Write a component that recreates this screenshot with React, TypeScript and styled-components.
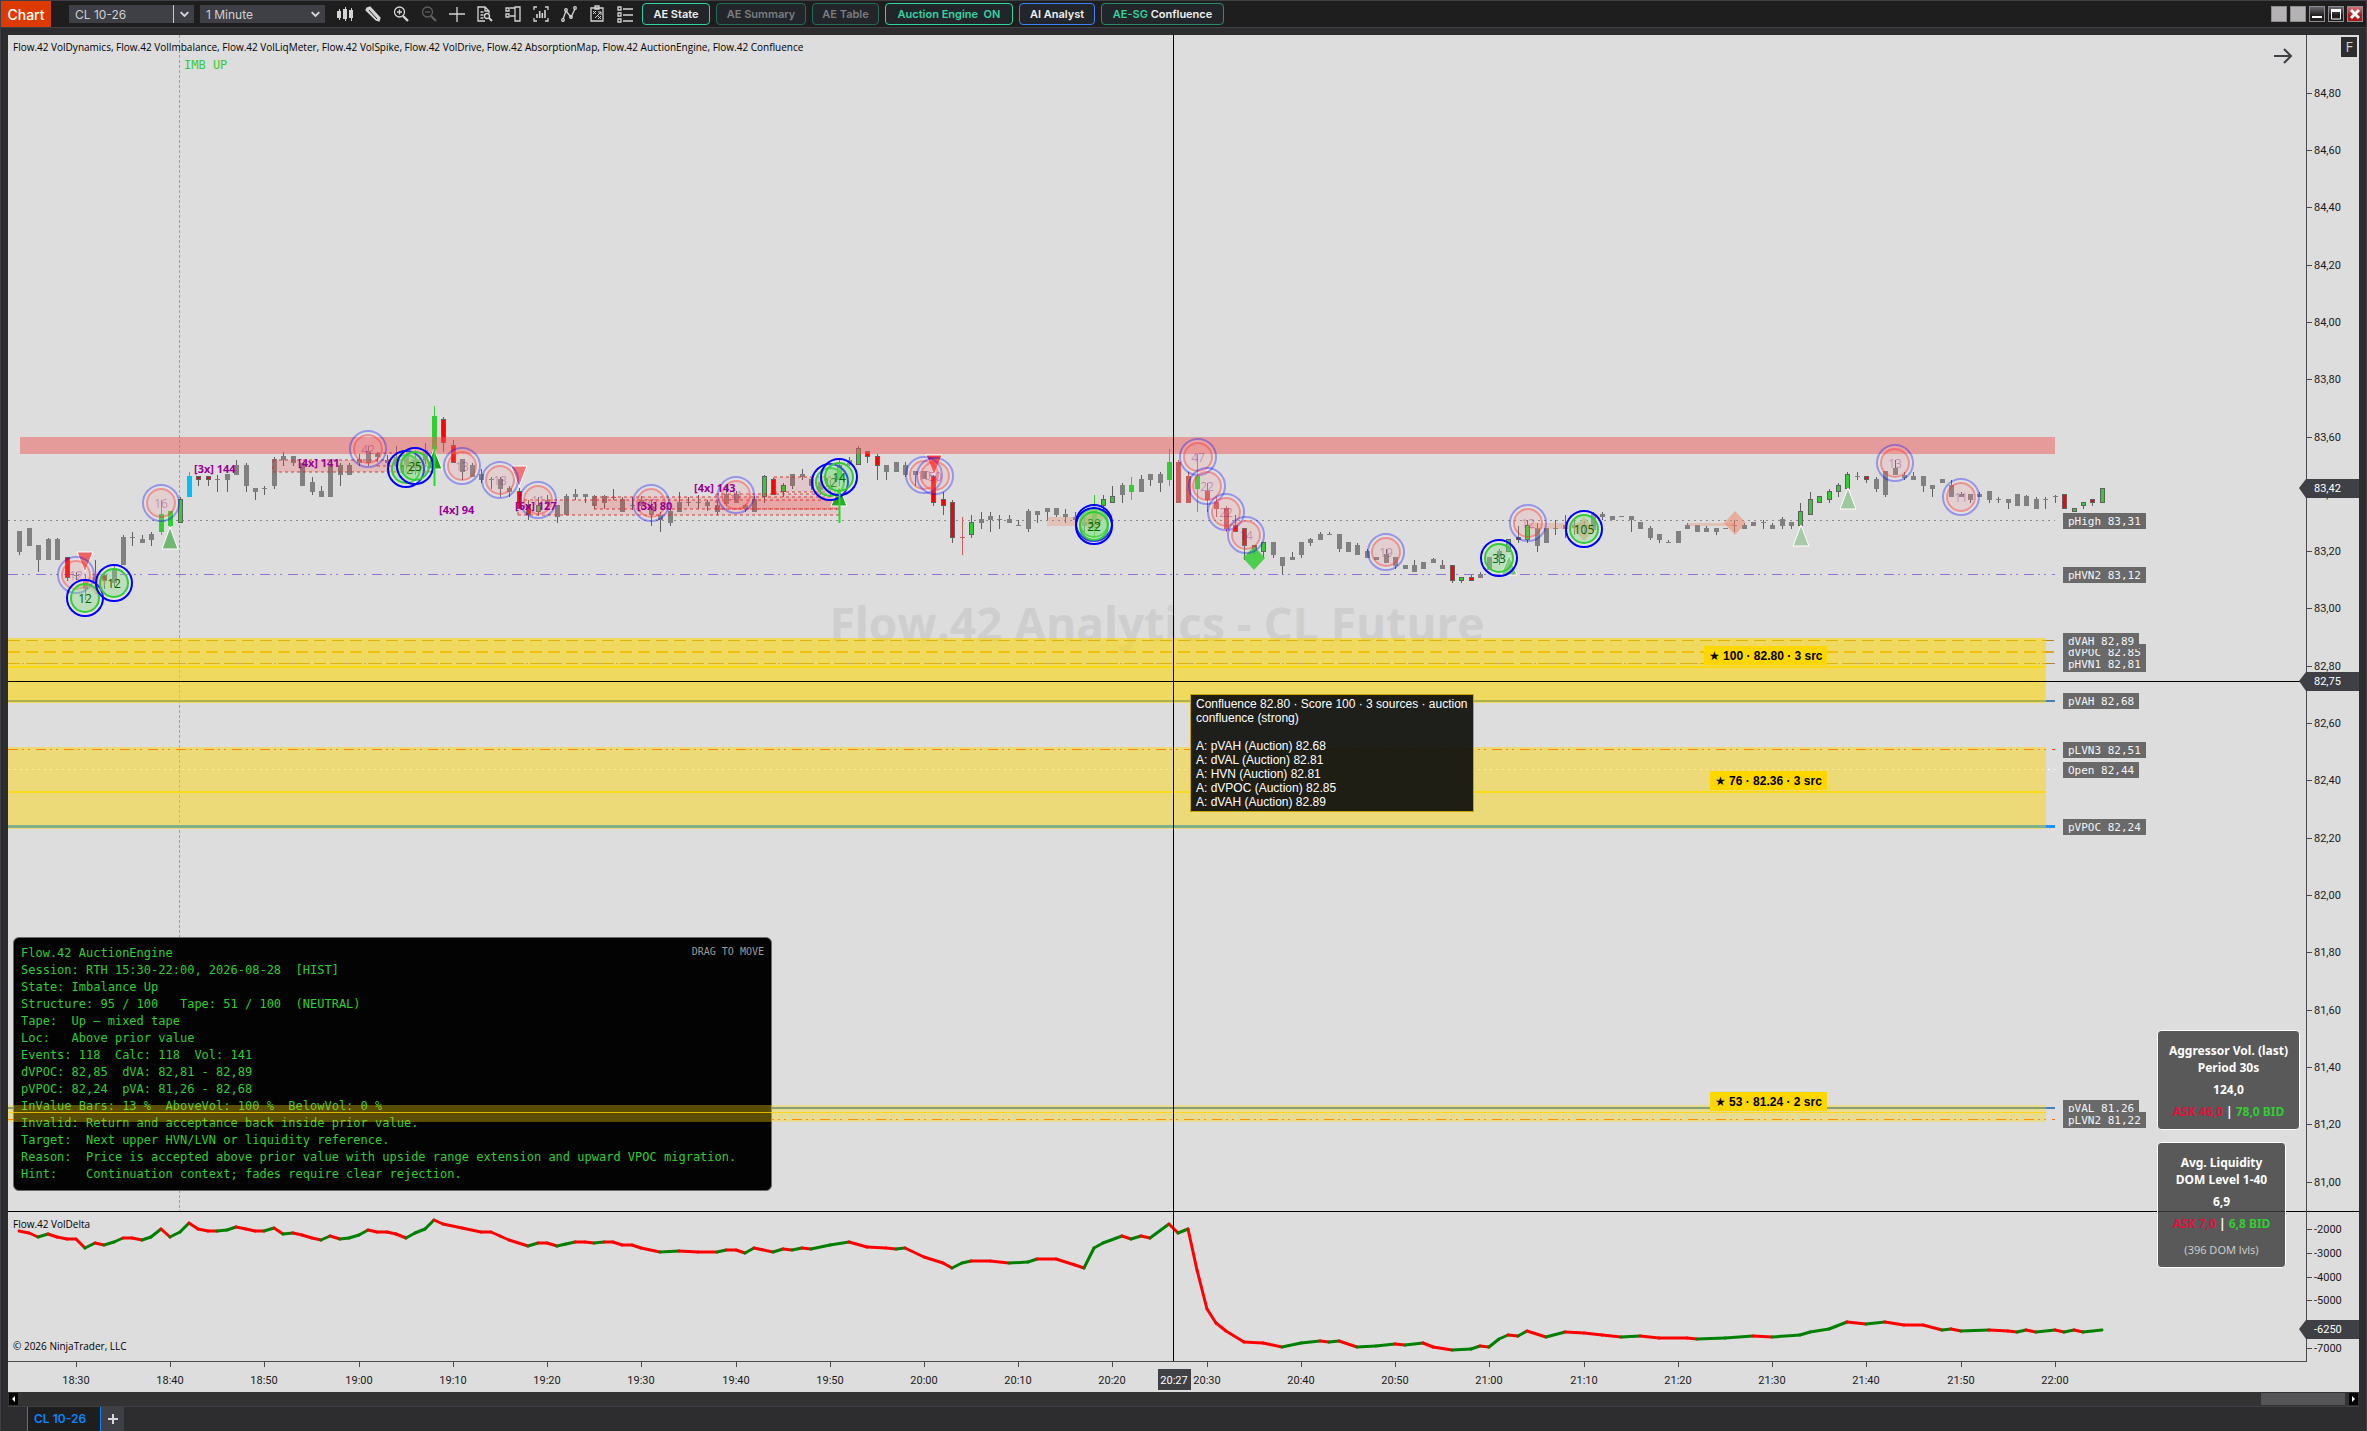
import React from "react";
import styled, { createGlobalStyle } from "styled-components";

const UI = `"Open Sans", "Noto Sans", sans-serif`;
const SMALL = `Roboto, "Noto Sans", sans-serif`;
const BAR = `Inter, Roboto, sans-serif`;
const MONO = `"DejaVu Sans Mono", "Liberation Mono", monospace`;

const Global = createGlobalStyle`
  *, *::before, *::after { box-sizing: border-box; }
  body { margin: 0; background: #2d2d30; font-family: ${UI}; }
  button, select { font: inherit; color: inherit; margin: 0; }
`;

/* ---------- window chrome ---------- */

const Frame = styled.div`
  min-height: 100vh;
  display: flex;
  flex-direction: column;
  background: #2d2d30;
  border: 1px solid #3f3f46;
  border-bottom: 0;
`;

const TitleBar = styled.header`
  height: 27px;
  flex: none;
  display: flex;
  align-items: center;
  background: #1e1e1e;
  border-bottom: 1px solid #3f3f46;
  font-family: ${BAR};
  font-size: 12px;
  color: #d0d0d0;
`;

const ChartMenu = styled.button`
  align-self: stretch;
  width: 50px;
  margin-right: 18px;
  padding: 0;
  border: 0;
  background: #dc3a00;
  color: #fff;
  font-size: 14px;
  font-weight: 500;
`;

const SelectBox = styled.label<{ $width: number; $divided?: boolean }>`
  display: grid;
  grid-template-columns: 1fr 21px;
  align-items: center;
  width: ${(p) => p.$width}px;
  height: 18px;
  margin-right: 6px;
  background: #3f3f46;
  svg {
    grid-area: 1 / 2;
    width: 21px;
    height: 18px;
    pointer-events: none;
    border-left: 1px solid ${(p) => (p.$divided ? "#c8c8c8" : "transparent")};
  }
  select {
    grid-area: 1 / 1 / 2 / 3;
    height: 18px;
    padding: 0 24px 0 6px;
    border: 0;
    background: transparent;
    appearance: none;
  }
`;

const IconBar = styled.div`
  display: flex;
  gap: 4px;
  margin-left: 2px;
  margin-right: 5px;
`;

const IconButton = styled.button<{ $dim?: boolean }>`
  width: 24px;
  height: 24px;
  padding: 3px;
  border: 0;
  background: none;
  color: ${(p) => (p.$dim ? "#5e5e5e" : "#d4d4d4")};
  svg { display: block; width: 18px; height: 18px; }
`;

const Toggles = styled.div`
  display: flex;
  gap: 6px;
`;

const Toggle = styled.button<{ $width: number; $line: string; $ink: string }>`
  width: ${(p) => p.$width}px;
  height: 22px;
  padding: 0;
  border: 1px solid ${(p) => p.$line};
  border-radius: 4px;
  background: #22262b;
  color: ${(p) => p.$ink};
  font-size: 11px;
  font-weight: 600;
  white-space: pre;
`;

const Accent = styled.span`
  color: #34d3a0;
`;

const WindowButtons = styled.div`
  display: flex;
  gap: 3px;
  margin-left: auto;
  margin-right: 3px;
`;

const WindowButton = styled.button<{ $tone: string }>`
  width: 16px;
  height: 16px;
  padding: 0;
  border: 1px solid #8c8c8c;
  background: ${(p) => p.$tone};
  svg { display: block; width: 14px; height: 14px; }
`;

/* ---------- chart panes ---------- */

const Chart = styled.main`
  flex: 1;
  margin: 7px 7px 0;
  display: grid;
  grid-template-columns: minmax(0, 1fr) 53px;
  grid-template-rows: minmax(0, 1fr) 31px;
  background: #dddddd;
  color: #1a1a1a;
`;

const Plot = styled.section`
  position: relative;
  display: flex;
  flex-direction: column;
  overflow: hidden;
`;

const PricePane = styled.div`
  position: relative;
  flex: 1;
  overflow: hidden;
`;

const DeltaPane = styled.div`
  position: relative;
  height: 150px;
  border-top: 1px solid #000;
`;

const Layer = styled.svg`
  position: absolute;
  inset: 0;
  width: 100%;
  height: 100%;
  pointer-events: none;
`;

const ScaleLayer = styled(Layer)`
  overflow: visible;
`;

const PaneTitle = styled.div`
  position: absolute;
  left: 5px;
  top: 3px;
  color: #000;
  font-size: 10px;
  line-height: 18px;
  white-space: nowrap;
`;

const Copyright = styled(PaneTitle)`
  top: auto;
  bottom: 6px;
`;

const Watermark = styled.div`
  position: absolute;
  inset: 0;
  display: flex;
  align-items: center;
  justify-content: center;
  color: #cecece;
  font-size: 46px;
  font-weight: 700;
`;

const ScrollArrow = styled.button`
  position: absolute;
  right: 12px;
  top: 10px;
  width: 22px;
  height: 22px;
  padding: 0;
  border: 0;
  background: none;
  color: #3f3f46;
  svg { display: block; width: 22px; height: 22px; }
`;

const Axis = styled.aside`
  position: relative;
  border-left: 1px solid #4a4a4e;
`;

const FixedScale = styled.button`
  position: absolute;
  top: 2px;
  right: 2px;
  width: 16px;
  height: 20px;
  padding: 0;
  border: 0;
  background: #2d2d30;
  color: #d0d0d0;
  font-size: 14px;
  line-height: 18px;
`;

const TimeAxis = styled.div`
  position: relative;
  grid-column: 1 / 3;
  overflow: hidden;
`;

/* ---------- floating panels ---------- */

const InfoPanel = styled.div`
  position: absolute;
  left: 5px;
  bottom: 20px;
  width: 759px;
  padding: 7px;
  background: #030303;
  border: 1px solid #6a6a6a;
  border-radius: 6px;
  color: #32cd32;
  pre {
    margin: 0;
    font: 12px/17px ${MONO};
  }
`;

const DragHint = styled.span`
  position: absolute;
  top: 7px;
  right: 7px;
  color: #9a9a9a;
  font: 10px/14px ${MONO};
  white-space: nowrap;
`;

const Tooltip = styled.div`
  position: absolute;
  left: 1182px;
  top: 659px;
  width: 284px;
  padding: 2px 3px 2px 5px;
  background: rgba(18, 18, 14, 0.94);
  border: 1px solid #c9a800;
  color: #fff;
  font: 12px/14px "Liberation Sans", Arial, sans-serif;
  p { margin: 0 0 14px; }
  ul { margin: 0; padding: 0; list-style: none; }
`;

const Cards = styled.div`
  position: absolute;
  top: 995px;
  right: 6px;
  width: 143px;
  display: flex;
  flex-direction: column;
  align-items: flex-start;
  gap: 12px;
`;

const Card = styled.div<{ $width: number }>`
  width: ${(p) => p.$width}px;
  padding: 11px 0 9px;
  background: rgba(60, 60, 60, 0.82);
  border: 1px solid #fff;
  border-radius: 4px;
  color: #fff;
  font-family: "Noto Sans", "Open Sans", sans-serif;
  font-size: 12px;
  font-weight: 700;
  line-height: 17px;
  text-align: center;
  white-space: nowrap;
`;

const Figure = styled.div`
  margin: 5px 0;
`;

const Ask = styled.span`
  color: #dc143c;
`;

const Bid = styled.span`
  color: #32cd32;
`;

const Note = styled.div`
  margin-top: 9px;
  color: #cccccc;
  font-size: 11px;
  font-weight: 400;
`;

/* ---------- bottom chrome ---------- */

const ScrollTrack = styled.div`
  height: 15px;
  margin: 0 7px;
  padding: 1px;
  display: flex;
  justify-content: space-between;
  background: #333333;
  border-bottom: 1px solid #3f3f46;
`;

const ScrollEnd = styled.button`
  width: 9px;
  height: 12px;
  padding: 0;
  border: 0;
  background: #000;
  svg { display: block; width: 9px; height: 12px; }
`;

const ScrollThumb = styled.div`
  width: 84px;
  height: 12px;
  margin-left: auto;
  margin-right: 4px;
  background: #555558;
`;

const Tabs = styled.nav`
  height: 24px;
  display: flex;
  padding-left: 26px;
  font-family: ${BAR};
`;

const Tab = styled.button`
  width: 74px;
  padding: 0 6px;
  border: 0;
  border-left: 1px solid #0a84ff;
  border-right: 1px solid #0a84ff;
  background: #1e1e1e;
  color: #0a84ff;
  font-size: 12px;
  font-weight: 600;
  line-height: 22px;
  text-align: left;
`;

const AddTab = styled.button`
  width: 23px;
  padding: 0;
  border: 0;
  background: #3f3f46;
  color: #d8d8d8;
  svg { display: block; margin: auto; width: 12px; height: 12px; }
`;

/* ---------- data ---------- */

// One entry per minute from 18:24: body top, body bottom, high, low, tone.
// Tones: n neutral, R/G outlined, r/g plain, B blue.
const CANDLES = `131 152 131 155 n|128 146 128 146 n|145 160 145 172 n|139 160 138 160 n|139 160 138 160 n|157 178 157 181 R|175 176 172 180 n|180 189 175 200 r|177 184 160 188 n|175 181 172 189 R|169 183 165 187 n|137 165 135 165 n|137 138 132 146 n|139 143 135 143 n|134 140 132 146 n|114 132 100 135 g|111 126 111 127 g|99 123 97 123 G|76 97 72 97 B|76 80 76 86 R|76 80 76 86 R|79 80 75 92 n|74 80 74 92 n|65 75 60 75 n|65 86 63 92 n|88 92 88 100 n|88 89 86 95 n|59 86 57 89 n|56 60 52 66 n|56 63 56 66 n|63 86 63 86 n|82 92 77 95 n|91 97 86 97 n|65 97 65 97 n|65 75 63 86 n|65 75 63 75 n|59 63 54 66 n|51 63 46 66 n|53 57 52 62 n|60 63 55 66 n|57 66 46 70 n|55 65 50 70 n|60 68 50 75 n|50 60 43 64 n|16 49 6 52 g|19 43 17 52 R|45 63 40 63 R|59 72 59 80 n|65 77 63 77 n|74 80 69 83 n|79 80 77 89 n|79 89 77 97 n|88 92 86 97 n|91 109 88 109 R|105 115 100 120 R|105 112 97 116 G|100 104 95 110 n|105 117 105 123 n|96 115 94 115 n|94 97 89 100 n|94 97 94 103 n|96 106 95 109 n|96 103 95 109 n|97 98 89 100 n|99 112 97 112 n|105 106 97 110 n|100 106 96 109 n|106 115 100 126 n|115 120 112 132 n|111 123 109 126 n|102 112 92 112 n|102 103 97 106 n|102 103 95 109 n|102 106 100 111 n|105 112 101 115 n|94 104 86 106 n|94 103 91 103 n|105 109 104 112 n|99 112 96 112 n|76 97 75 103 G|79 95 78 95 R|85 92 83 97 G|74 86 74 89 n|74 77 69 80 n|79 86 78 90 n|82 90 78 95 n|85 90 80 95 n|65 80 60 97 G|60 65 57 66 n|48 65 46 65 G|51 57 51 63 R|56 66 54 80 R|65 72 65 80 n|62 72 62 72 n|65 75 62 77 n|71 75 71 86 n|71 79 71 79 n|76 103 75 106 R|99 106 92 115 R|102 138 100 143 R|137 138 117 155 r|122 135 115 138 G|119 123 112 129 n|116 120 112 132 n|119 120 115 129 n|119 123 115 123 n|125 126 120 126 n|111 129 109 132 n|111 115 111 123 n|108 112 108 120 n|108 115 108 117 n|114 117 109 123 n|117 120 112 123 n|122 126 115 132 n|107 120 95 136 g|99 106 95 110 G|96 103 86 103 G|85 95 83 103 n|85 92 77 100 g|79 92 75 92 n|74 80 74 86 n|74 83 72 92 n|62 80 49 86 g|62 103 60 103 r|76 103 72 103 r|76 89 54 112 g|91 100 83 112 r|102 109 97 117 r|108 129 106 132 r|125 132 115 132 R|128 146 128 160 R|145 150 145 155 R|142 152 142 158 G|142 155 142 158 n|157 166 157 174 n|157 160 152 160 n|142 155 142 158 n|139 143 138 146 n|134 140 132 140 n|134 135 132 135 n|134 149 134 152 n|142 152 142 152 n|145 155 143 155 n|151 158 149 158 n|157 160 157 160 n|154 163 149 163 n|157 166 157 169 n|165 169 165 169 n|165 172 160 172 n|162 169 162 169 n|159 163 158 163 n|165 169 160 169 n|165 181 165 183 R|177 181 177 183 G|177 181 175 181 R|174 178 172 178 n|157 170 157 170 n|151 158 149 165 n|139 152 139 152 G|137 140 126 143 R|125 140 120 143 G|128 146 123 152 n|128 143 128 143 n|128 129 120 135 n|125 129 115 138 n|125 128 118 135 n|125 128 121 135 n|114 130 112 132 n|114 117 112 120 n|116 120 116 120 n|116 117 116 117 n|116 120 116 132 n|122 129 122 129 n|128 138 126 140 n|134 140 134 143 n|142 143 140 143 n|131 143 131 143 n|125 129 123 129 n|125 132 125 132 n|128 132 126 132 n|128 132 128 135 n|128 129 128 129 n|125 126 120 132 n|125 129 123 129 n|122 126 122 126 n|122 123 120 129 n|125 129 123 129 n|119 126 117 129 n|122 126 122 129 n|111 126 103 126 G|99 115 92 115 G|96 103 96 103 G|91 100 89 103 G|85 92 83 97 G|74 89 72 89 G|76 77 72 80 n|76 80 76 83 R|79 89 77 92 n|71 95 71 97 n|68 75 60 75 n|75 78 72 80 n|76 80 72 80 n|76 86 76 92 n|85 89 85 97 n|79 83 79 83 n|85 97 80 97 n|94 97 92 97 n|94 100 94 103 n|94 97 92 97 n|91 100 91 103 n|99 100 97 103 n|99 103 99 109 n|94 106 94 106 n|96 106 95 106 n|99 109 97 109 n|99 100 97 109 n|96 97 95 103 n|94 109 94 109 R|108 112 108 112 G|102 106 102 109 G|99 103 99 106 R|88 103 88 103 G`
  .split("|")
  .map((row, i) => {
    const [top, bottom, high, low, tone] = row.split(" ");
    return { i, top: +top, bottom: +bottom, high: +high, low: +low, tone };
  });

const minuteX = (m: number) => Math.round(19.4 + m * 9.423);
const priceY = (p: number) => Math.round(92.6 + (84.8 - p) * 286.6);

const TONES: Record<string, { fill: string; wick: string; outline?: boolean }> = {
  n: { fill: "#808080", wick: "#606060" },
  R: { fill: "#ff0000", wick: "#606060", outline: true },
  G: { fill: "#32cd32", wick: "#606060", outline: true },
  r: { fill: "#cd5c5c", wick: "#cd5c5c" },
  g: { fill: "#32cd32", wick: "#32cd32" },
  B: { fill: "#00bfff", wick: "#00bfff" },
};

const FADED: [number, number, string][] = [
  [161, 503, "16"], [76, 575, "12"], [368, 449, "42"], [462, 466, "13"], [500, 480, "18"],
  [538, 500, "11"], [651, 503, "33"], [736, 495, "31"], [924, 475, "10"], [935, 476, "50"],
  [1198, 457, "47"], [1207, 486, "22"], [1226, 512, "22"], [1246, 535, "14"],
  [1386, 552, "19"], [1528, 523, "12"], [1895, 463, "13"], [1961, 497, "11"],
];

const STRONG: [number, number, string][] = [
  [85, 598, "12"], [114, 583, "12"], [406, 469, "12"], [415, 466, "25"], [830, 482, "12"],
  [839, 477, "14"], [1094, 523, "39"], [1094, 526, "22"], [1499, 558, "33"], [1584, 529, "105"],
];

const TRIANGLES: [number, number, number, string, number][] = [
  [170, 527, 549, "#2ca02c", 0.6], [434, 449, 469, "#0f9f0f", 0.95], [839, 486, 506, "#0f9f0f", 0.85],
  [1509, 555, 575, "#2ca02c", 0.55], [1801, 525, 546, "#2ca02c", 0.3], [1848, 488, 509, "#2ca02c", 0.35],
  [85, 572, 552, "#ff2020", 0.65], [519, 487, 466, "#ff2020", 0.55], [934, 475, 455, "#ff2020", 0.85],
];

const DIAMONDS: [number, number, string, number][] = [
  [1254, 558, "#32cd32", 0.85], [1584, 529, "#e9967a", 0.6], [1735, 523, "#f08060", 0.5],
  [96, 583, "#ff8c50", 0.4], [1093, 518, "#ff7030", 0.5],
];

const STRIPS: [number, number, number, number][] = [
  [1047, 517, 46, 9], [1528, 523, 56, 6], [1687, 523, 48, 3],
];

// x1, y1, x2, y2, fill strength
const ZONES: [number, number, number, number, number][] = [
  [273, 460, 433, 472, 0.2], [377, 453, 433, 466, 0.06], [518, 500, 839, 515, 0.1],
  [594, 497, 839, 509, 0.14], [716, 494, 839, 509, 0.12], [774, 477, 839, 492, 0.12],
];

const CALLS: [number, number, string][] = [
  [194, 473, "[3x] 144"], [298, 467, "[4x] 141"], [439, 514, "[4x] 94"],
  [515, 510, "[6x] 127"], [637, 510, "[3x] 80"], [694, 492, "[4x] 143"],
];

const LEVELS = [
  { name: "dVPOC", price: 82.85, color: "#daa520", width: 2, dash: "12 6" },
  { name: "dVAH", price: 82.89, color: "#b8860b", width: 1, dash: "12 6" },
  { name: "pHVN1", price: 82.81, color: "#9370db", width: 1, dash: "10 4 2 4 2 6" },
  { name: "pVAH", price: 82.68, color: "#4682b4", width: 2 },
  { name: "pLVN3", price: 82.51, color: "#ff4500", width: 1, dash: "10 4 2 4 2 6" },
  { name: "Open", price: 82.44, color: "#ffffff", width: 1, dash: "2 4" },
  { name: "pVPOC", price: 82.24, color: "#1e90ff", width: 3 },
  { name: "pVAL", price: 81.26, color: "#4682b4", width: 2 },
  { name: "pLVN2", price: 81.22, color: "#ff6a00", width: 1, dash: "10 4 2 4 2 6" },
  { name: "pHigh", price: 83.31, color: "#8a8a8a", width: 1, dash: "2 4" },
  { name: "pHVN2", price: 83.12, color: "#9370db", width: 1, dash: "10 4 2 4 2 6" },
];

const CONFLUENCE = [
  { y: 638, h: 65, mid: 666, line: 2, alpha: 0.57, text: "★ 100 · 82.80 · 3 src", x: 1704, tagY: 646 },
  { y: 747, h: 82, mid: 791, line: 2, alpha: 0.45, text: "★ 76 · 82.36 · 3 src", x: 1710, tagY: 771 },
  { y: 1105, h: 17, mid: 1112, line: 1, alpha: 0.35, text: "★ 53 · 81.24 · 2 src", x: 1710, tagY: 1092 },
];

// minute since 18:24, y of the cumulative delta
const DELTA: [number, number][] = [
  [0, 1231], [1, 1233], [2, 1237], [3, 1234], [4, 1237], [5, 1239], [6, 1239], [7, 1248], [8, 1243], [9, 1245],
  [10, 1242], [11, 1238], [12, 1238], [13, 1240], [14, 1237], [15, 1229], [16, 1237], [17, 1232], [18, 1223],
  [19, 1229], [20, 1231], [21, 1231], [22, 1230], [23, 1227], [24, 1229], [25, 1231], [26, 1231], [27, 1228],
  [28, 1234], [29, 1233], [30, 1235], [31, 1238], [32, 1240], [33, 1236], [34, 1239], [35, 1238], [36, 1235],
  [37, 1230], [38, 1232], [39, 1232], [40, 1234], [41, 1238], [42, 1233], [43, 1229], [44, 1220], [45, 1224],
  [47, 1228], [49, 1232], [50, 1232], [51, 1236], [52, 1240], [54, 1246], [55, 1243], [56, 1243], [57, 1246],
  [58, 1244], [59, 1242], [60, 1242], [61, 1243], [62, 1242], [63, 1242], [64, 1245], [65, 1245], [66, 1248],
  [68, 1252], [70, 1251], [72, 1252], [74, 1252], [75, 1250], [76, 1250], [77, 1253], [78, 1248], [80, 1252],
  [81, 1249], [82, 1250], [83, 1248], [84, 1249], [86, 1245], [88, 1242], [90, 1247], [92, 1248], [93, 1249],
  [94, 1248], [96, 1257], [98, 1263], [99, 1268], [100, 1263], [101, 1261], [103, 1261], [105, 1263],
  [107, 1262], [108, 1259], [110, 1259], [112, 1265], [113, 1268], [114, 1248], [115, 1243], [117, 1236],
  [118, 1239], [119, 1236], [120, 1238], [122, 1224], [123, 1233], [124, 1229], [125, 1270], [126, 1309],
  [127, 1323], [128, 1331], [130, 1342], [132, 1343], [134, 1347], [136, 1343], [138, 1341], [139, 1342],
  [140, 1341], [142, 1347], [144, 1346], [146, 1344], [147, 1345], [149, 1343], [150, 1347], [152, 1350],
  [154, 1349], [155, 1346], [156, 1347], [157, 1339], [158, 1335], [159, 1336], [160, 1331], [162, 1337],
  [164, 1332], [166, 1333], [168, 1335], [170, 1337], [172, 1336], [174, 1338], [177, 1338], [178, 1339],
  [181, 1338], [184, 1336], [186, 1337], [189, 1335], [190, 1332], [192, 1329], [194, 1322], [196, 1324],
  [198, 1322], [200, 1325], [202, 1325], [204, 1330], [205, 1329], [206, 1331], [209, 1330], [211, 1331],
  [212, 1332], [213, 1330], [214, 1332], [216, 1330], [217, 1332], [218, 1330], [219, 1332], [221, 1330],
];

const PRICES = Array.from({ length: 20 }, (_, i) => 84.8 - i * 0.2);
const TIMES = Array.from({ length: 22 }, (_, i) => {
  const t = 18 * 60 + 30 + i * 10;
  return { m: 6 + i * 10, label: `${Math.floor(t / 60)}:${String(t % 60).padStart(2, "0")}` };
});
const comma = (p: number) => p.toFixed(2).replace(".", ",");

const REPORT = `Flow.42 AuctionEngine
Session: RTH 15:30-22:00, 2026-08-28  [HIST]
State: Imbalance Up
Structure: 95 / 100   Tape: 51 / 100  (NEUTRAL)
Tape:  Up — mixed tape
Loc:   Above prior value
Events: 118  Calc: 118  Vol: 141
dVPOC: 82,85  dVA: 82,81 - 82,89
pVPOC: 82,24  pVA: 81,26 - 82,68
InValue Bars: 13 %  AboveVol: 100 %  BelowVol: 0 %
Invalid: Return and acceptance back inside prior value.
Target:  Next upper HVN/LVN or liquidity reference.
Reason:  Price is accepted above prior value with upside range extension and upward VPOC migration.
Hint:    Continuation context; fades require clear rejection.`;

/* ---------- icons ---------- */

const stroke = { fill: "none", stroke: "currentColor", strokeWidth: 1.3 } as const;

const TOOLS: { name: string; dim?: boolean; art: React.ReactNode }[] = [
  { name: "Chart style", art: <g fill="currentColor"><rect x="1" y="6" width="4" height="7" /><rect x="3" y="4" width="1" height="11" /><rect x="7" y="4" width="4" height="10" /><rect x="9" y="2" width="1" height="14" /><rect x="13" y="5" width="4" height="8" /><rect x="15" y="3" width="1" height="13" /></g> },
  { name: "Drawing tools", art: <g {...stroke}><path d="M3 3l3-1 10 11-1 3-3-1L2 5z" fill="currentColor" /><path d="M5 5l8 9" stroke="#1e1e1e" strokeWidth="1" /></g> },
  { name: "Zoom in", art: <g {...stroke}><circle cx="7.5" cy="7" r="5" /><path d="M5 7h5M7.5 4.5v5" /><path d="M11 11l5 5" strokeWidth="2.4" /></g> },
  { name: "Zoom out", dim: true, art: <g {...stroke}><circle cx="7.5" cy="7" r="5" /><path d="M5 7h5" /><path d="M11 11l5 5" strokeWidth="2.4" /></g> },
  { name: "Crosshair", art: <path {...stroke} d="M9 2v15M1 9h16" /> },
  { name: "Data series", art: <g {...stroke}><path d="M9 16H2V2h7l4 4v2M9 2v4h4M4.5 7h3M4.5 10h3M4.5 13h3" /><circle cx="11" cy="11" r="2.5" /><path d="M13 13l3 3" strokeWidth="2" /></g> },
  { name: "Chart trader", art: <g {...stroke}><path d="M2 3h3v3H2zM2 9h3v3H2zM6 3h5M6 11h5M11 2h5v14h-5z" /></g> },
  { name: "Strategies", art: <g {...stroke}><path d="M2 5V2h3M13 2h3v3M16 13v3h-3M5 16H2v-3" /><path d="M5 13V9M7.7 13V6M10.3 13V8M13 13V5" strokeWidth="1.6" /></g> },
  { name: "Indicators", art: <g {...stroke}><path d="M3 14l3-8 5 6 4-8" /><circle cx="3" cy="15" r="1.3" /><circle cx="6" cy="5" r="1.3" /><circle cx="11" cy="12" r="1.3" /><circle cx="15" cy="3" r="1.3" /></g> },
  { name: "Performance", art: <g {...stroke}><path d="M3 3h12v13H3zM7 1h4v3H7z" /><path d="M5 6l3 3M8 6L5 9M10 7h3v3M13 7l-6 6M10 11l3 3M13 11l-3 3" strokeWidth="1" /></g> },
  { name: "Properties", art: <g {...stroke}><path d="M2 2h3v3H2zM2 8h3v3H2zM2 14h3v3H2zM7 4h10M7 10h10M7 16h10" /></g> },
];

const Chevron = () => (
  <svg viewBox="0 0 21 18" aria-hidden="true"><path d="M7 7l4 4 4-4" fill="none" stroke="#d8d8d8" strokeWidth="2" /></svg>
);

/* ---------- drawings ---------- */

function Candles() {
  return (
    <g shapeRendering="crispEdges">
      {CANDLES.map((c) => {
        const tone = TONES[c.tone];
        const x = minuteX(c.i);
        const h = Math.max(1, c.bottom - c.top);
        return (
          <g key={c.i}>
            <rect x={x} y={400 + c.high} width={1} height={c.low - c.high} fill={tone.wick} />
            <rect x={x - 2} y={400 + c.top} width={5} height={h} fill={tone.outline ? "#606060" : tone.fill} />
            {tone.outline && h > 2 && <rect x={x - 1} y={401 + c.top} width={3} height={h - 2} fill={tone.fill} />}
          </g>
        );
      })}
    </g>
  );
}

function Markers() {
  return (
    <g fontFamily={UI} fontSize={12} textAnchor="middle">
      {STRIPS.map(([x, y, w, h]) => <rect key={x} x={x} y={y} width={w} height={h} fill="#f0805c" opacity={0.3} />)}
      {DIAMONDS.map(([x, y, fill, o]) => <path key={x} d={`M${x} ${y - 12}l11 12-11 12-11-12z`} fill={fill} opacity={o} />)}
      {TRIANGLES.map(([x, tip, base, fill, o]) => (
        <path key={`${x}-${tip}`} d={`M${x} ${tip}L${x + 8} ${base}H${x - 8}z`} fill={fill} fillOpacity={o} stroke="#fff" />
      ))}
      {FADED.map(([x, y, t]) => (
        <g key={`${x}-${y}`}>
          <circle cx={x} cy={y} r={18} fill="#fff" fillOpacity={0.1} stroke="#0000ff" strokeOpacity={0.33} strokeWidth={2} />
          <circle cx={x} cy={y} r={14} fill="#ff0000" fillOpacity={0.07} stroke="#ff3030" strokeOpacity={0.42} strokeWidth={2} />
          <text x={x} y={y + 5} fill="#8b008b" opacity={0.33}>{t}</text>
        </g>
      ))}
      {STRONG.map(([x, y, t]) => (
        <g key={`${x}-${y}`}>
          <circle cx={x} cy={y} r={18} fill="#fff" fillOpacity={0.2} stroke="#0000ff" strokeWidth={2} />
          <circle cx={x} cy={y} r={14} fill="#32cd32" fillOpacity={0.22} stroke="#32cd32" strokeWidth={2} />
          <text x={x} y={y + 5} fill="#006400">{t}</text>
        </g>
      ))}
      <path d="M434.5 446v40M839.5 490v33" stroke="#22e022" strokeWidth={2} />
    </g>
  );
}

function LevelLines() {
  return (
    <g shapeRendering="crispEdges">
      {LEVELS.map((l) => {
        const y = priceY(l.price) + (l.width % 2 ? 0.5 : 1);
        return <line key={l.name} x1={8} x2={2055} y1={y} y2={y} stroke={l.color} strokeWidth={l.width} strokeDasharray={l.dash} />;
      })}
      <line x1={8} x2={2054} y1={663.5} y2={663.5} stroke="#b8860b" strokeDasharray="12 6" />
    </g>
  );
}

function LevelTags() {
  return (
    <g fontFamily={MONO} fontSize={11}>
      {LEVELS.map((l) => {
        const label = `${l.name} ${comma(l.price)}`;
        const y = priceY(l.price) - 7;
        return (
          <g key={l.name}>
            <rect x={2063} y={y} width={10 + Math.round(label.length * 6.62)} height={16} fill="#696969" />
            <text x={2068} y={y + 12} fill="#f5f5f5">{label}</text>
          </g>
        );
      })}
    </g>
  );
}

function PriceDrawing() {
  return (
    <Layer role="img" aria-label="CL 10-26 one minute candles">
      <g transform="translate(-8 -35)">
        <line x1={179.5} x2={179.5} y1={35} y2={1211} stroke="#5cd05c" strokeDasharray="3 2" shapeRendering="crispEdges" />
        <LevelLines />
        <Candles />
        <rect x={20} y={437} width={2035} height={17} fill="#f05a5a" opacity={0.5} />
        <g shapeRendering="crispEdges">
          {ZONES.map(([x1, y1, x2, y2, strength]) => (
            <g key={`${x1}-${y1}`}>
              <rect x={x1} y={y1} width={x2 - x1} height={y2 - y1} fill="#ff3030" opacity={strength} />
              <path d={`M${x1} ${y1}H${x2}M${x1} ${y2}H${x2}M${x1} ${y1}V${y2}`} stroke="#dc2828" strokeOpacity={0.45} strokeWidth={2} strokeDasharray="3 3" />
            </g>
          ))}
        </g>
        <Markers />
        <g fontFamily={UI} fontSize={11} fontWeight={700} fill="#960096">
          {CALLS.map(([x, y, t]) => <text key={t} x={x} y={y}>{t}</text>)}
        </g>
        <text x={184} y={69} fontFamily={MONO} fontSize={12} fill="#32cd32">IMB UP</text>
        <LevelTags />
      </g>
    </Layer>
  );
}

function ConfluenceLayer() {
  return (
    <Layer aria-label="Confluence zones" role="img">
      <g transform="translate(-8 -35)">
        {CONFLUENCE.map((z) => (
          <g key={z.y}>
            <rect x={8} y={z.y} width={2038} height={z.h} fill="#ffd700" opacity={z.alpha} />
            <rect x={8} y={z.mid} width={2038} height={z.line} fill="#ffd700" opacity={0.8} />
          </g>
        ))}
        <g fontFamily={`"Liberation Sans", "DejaVu Sans", sans-serif`} fontSize={12} fontWeight={700}>
          {CONFLUENCE.map((z) => (
            <g key={z.y}>
              <rect x={z.x} y={z.tagY} width={1827 - z.x} height={19} fill="#ffd700" />
              <text x={z.x + 5} y={z.tagY + 14} fill="#000">{z.text}</text>
            </g>
          ))}
        </g>
        <path d="M8 681.5H2307M1173.5 35V1212" stroke="#000" shapeRendering="crispEdges" />
      </g>
    </Layer>
  );
}

function DeltaDrawing() {
  return (
    <Layer role="img" aria-label="Cumulative volume delta">
      <g transform="translate(-8 -1212)" strokeWidth={3}>
        {DELTA.slice(1).map(([m, y], i) => {
          const [pm, py] = DELTA[i];
          return <line key={m} x1={minuteX(pm)} y1={py} x2={minuteX(m)} y2={y} stroke={y < py ? "#008000" : "#ff0000"} strokeLinecap="round" />;
        })}
        <path d="M1173.5 1211V1361" stroke="#000" strokeWidth={1} shapeRendering="crispEdges" />
      </g>
    </Layer>
  );
}

function ScaleDrawing() {
  return (
    <ScaleLayer role="img" aria-label="Price scale">
      <g transform="translate(-2307 -35)" fontFamily={SMALL} fontSize={11} fill="#1a1a1a">
        {PRICES.map((p) => (
          <g key={p}>
            <rect x={2307} y={priceY(p)} width={5} height={1} fill="#4a4a4e" />
            <text x={2314} y={priceY(p) + 4}>{comma(p)}</text>
          </g>
        ))}
        {[[-2000, 1229], [-3000, 1253], [-4000, 1277], [-5000, 1300], [-7000, 1348]].map(([v, y]) => (
          <g key={v}>
            <rect x={2307} y={y} width={5} height={1} fill="#4a4a4e" />
            <text x={2314} y={y + 4}>{v}</text>
          </g>
        ))}
        <rect x={2307} y={1211} width={52} height={1} fill="#000" />
        {[["83,42", 488], ["82,75", 681], ["-6250", 1329]].map(([t, y]) => (
          <g key={t}>
            <path d={`M2299 ${y}l7-9h53v19h-53z`} fill="#3f3f46" />
            <text x={2314} y={+y + 4} fill="#fff">{t}</text>
          </g>
        ))}
      </g>
    </ScaleLayer>
  );
}

function TimeDrawing() {
  return (
    <Layer role="img" aria-label="Time scale">
      <g transform="translate(-8 -1361)" fontFamily={SMALL} fontSize={11} textAnchor="middle" fill="#1a1a1a">
        <rect x={8} y={1361} width={2299} height={1} fill="#4a4a4e" />
        {TIMES.map((t) => (
          <g key={t.label}>
            <rect x={minuteX(t.m)} y={1361} width={1} height={6} fill="#4a4a4e" />
            <text x={minuteX(t.m)} y={1384}>{t.label}</text>
          </g>
        ))}
        <rect x={1158} y={1369} width={33} height={21} fill="#3f3f46" />
        <text x={1174} y={1384} fill="#fff">20:27</text>
      </g>
    </Layer>
  );
}

export default function App() {
  return (
    <Frame>
      <Global />
      <TitleBar>
        <ChartMenu>Chart</ChartMenu>
        <SelectBox $width={125} $divided>
          <select aria-label="Instrument"><option>CL 10-26</option></select>
          <Chevron />
        </SelectBox>
        <SelectBox $width={125}>
          <select aria-label="Interval"><option>1 Minute</option></select>
          <Chevron />
        </SelectBox>
        <IconBar>
          {TOOLS.map((t) => (
            <IconButton key={t.name} aria-label={t.name} $dim={t.dim}>
              <svg viewBox="0 0 18 18">{t.art}</svg>
            </IconButton>
          ))}
        </IconBar>
        <Toggles>
          <Toggle $width={68} $line="#34d3a0" $ink="#f0f0f0">AE State</Toggle>
          <Toggle $width={90} $line="#236b57" $ink="#7b7d80">AE Summary</Toggle>
          <Toggle $width={67} $line="#236b57" $ink="#7b7d80">AE Table</Toggle>
          <Toggle $width={128} $line="#34d3a0" $ink="#34d3a0">{"Auction Engine  ON"}</Toggle>
          <Toggle $width={76} $line="#3b82f6" $ink="#f0f0f0">AI Analyst</Toggle>
          <Toggle $width={123} $line="#2a8a6e" $ink="#f0f0f0"><Accent>AE-SG</Accent> Confluence</Toggle>
        </Toggles>
        <WindowButtons>
          <WindowButton aria-label="Link instrument" $tone="#b4b2b4" />
          <WindowButton aria-label="Link interval" $tone="#b4b2b4" />
          <WindowButton aria-label="Minimize" $tone="linear-gradient(#6a6870, #231f20 60%)"><svg viewBox="0 0 14 14"><path d="M2 9h10v2H2z" fill="#fff" /></svg></WindowButton>
          <WindowButton aria-label="Maximize" $tone="linear-gradient(#6a6870, #231f20 60%)"><svg viewBox="0 0 14 14"><path d="M2.5 3h9v9h-9z" fill="none" stroke="#fff" /><path d="M2 2h10v3H2z" fill="#fff" /></svg></WindowButton>
          <WindowButton aria-label="Close" $tone="linear-gradient(#d07078, #a8181c 60%)"><svg viewBox="0 0 14 14"><path d="M3 3l8 8M11 3l-8 8" stroke="#fff" strokeWidth="3" /></svg></WindowButton>
        </WindowButtons>
      </TitleBar>

      <Chart>
        <Plot>
          <PricePane>
            <Watermark>Flow.42 Analytics - CL Future</Watermark>
            <PriceDrawing />
            <PaneTitle>Flow.42 VolDynamics, Flow.42 VolImbalance, Flow.42 VolLiqMeter, Flow.42 VolSpike, Flow.42 VolDrive, Flow.42 AbsorptionMap, Flow.42 AuctionEngine, Flow.42 Confluence</PaneTitle>
            <ScrollArrow aria-label="Return to last bar"><svg viewBox="0 0 22 22"><path d="M2 11h17M12 4l7 7-7 7" fill="none" stroke="currentColor" strokeWidth="2" /></svg></ScrollArrow>
            <InfoPanel>
              <pre>{REPORT}</pre>
              <DragHint>DRAG TO MOVE</DragHint>
            </InfoPanel>
            <ConfluenceLayer />
            <Tooltip role="tooltip">
              <p>Confluence 82.80 · Score 100 · 3 sources · auction confluence (strong)</p>
              <ul>
                <li>A: pVAH (Auction) 82.68</li>
                <li>A: dVAL (Auction) 82.81</li>
                <li>A: HVN (Auction) 82.81</li>
                <li>A: dVPOC (Auction) 82.85</li>
                <li>A: dVAH (Auction) 82.89</li>
              </ul>
            </Tooltip>
          </PricePane>
          <DeltaPane>
            <PaneTitle>Flow.42 VolDelta</PaneTitle>
            <DeltaDrawing />
            <Copyright>© 2026 NinjaTrader, LLC</Copyright>
          </DeltaPane>
          <Cards>
            <Card $width={143}>
              Aggressor Vol. (last)<br />Period 30s
              <Figure>124,0</Figure>
              <Ask>ASK 46,0</Ask> | <Bid>78,0 BID</Bid>
            </Card>
            <Card $width={129}>
              Avg. Liquidity<br />DOM Level 1-40
              <Figure>6,9</Figure>
              <Ask>ASK 7,0</Ask> | <Bid>6,8 BID</Bid>
              <Note>(396 DOM lvls)</Note>
            </Card>
          </Cards>
        </Plot>
        <Axis>
          <ScaleDrawing />
          <FixedScale aria-label="Fixed scale">F</FixedScale>
        </Axis>
        <TimeAxis><TimeDrawing /></TimeAxis>
      </Chart>

      <ScrollTrack>
        <ScrollEnd aria-label="Scroll left"><svg viewBox="0 0 9 12"><path d="M6 3v6L3 6z" fill="#fff" /></svg></ScrollEnd>
        <ScrollThumb />
        <ScrollEnd aria-label="Scroll right"><svg viewBox="0 0 9 12"><path d="M3 3v6l3-3z" fill="#fff" /></svg></ScrollEnd>
      </ScrollTrack>
      <Tabs>
        <Tab>CL 10-26</Tab>
        <AddTab aria-label="New tab"><svg viewBox="0 0 12 12"><path d="M6 1v10M1 6h10" stroke="currentColor" strokeWidth="2" /></svg></AddTab>
      </Tabs>
    </Frame>
  );
}
